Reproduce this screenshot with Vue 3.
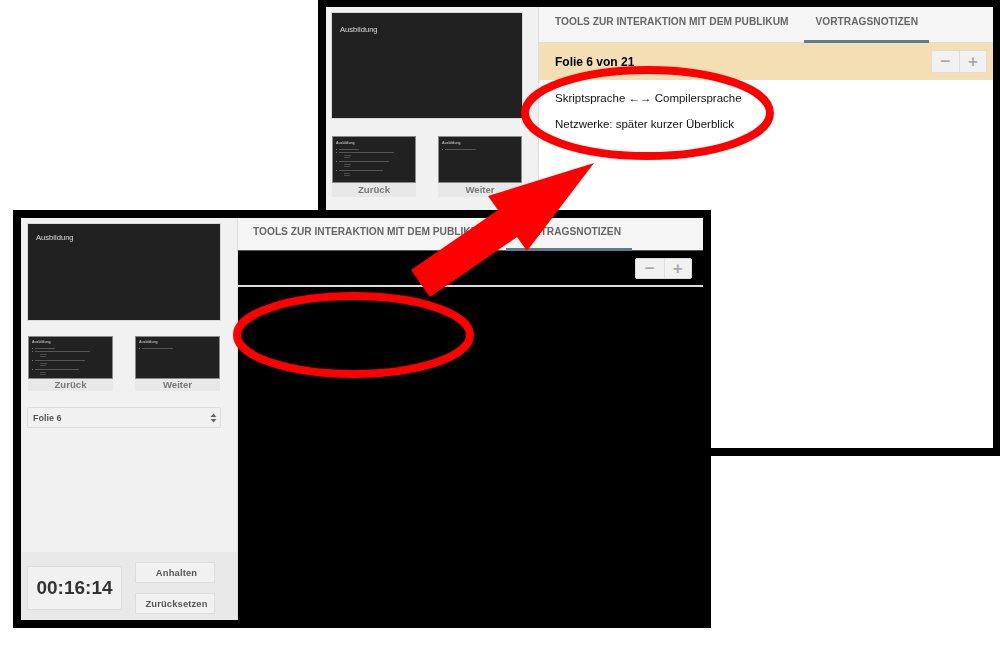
<script setup>
const prevLines = [
  { w: 20, sub: false, top: 4 },
  { w: 55, sub: false, top: 2 },
  { w: 7, sub: true, top: 2 },
  { w: 6, sub: true, top: 1 },
  { w: 50, sub: false, top: 3 },
  { w: 7, sub: true, top: 2 },
  { w: 6, sub: true, top: 1 },
  { w: 44, sub: false, top: 3 },
  { w: 6, sub: true, top: 2 },
  { w: 6, sub: true, top: 1 }
]
const nextLines = [{ w: 31, sub: false, top: 4 }]
const thumbs = [
  { label: 'Zurück', lines: prevLines },
  { label: 'Weiter', lines: nextLines }
]
const windows = [
  { id: 'back', notes: true },
  { id: 'front', notes: false }
]
</script>

<template>
  <div class="page">
    <section v-for="win in windows" :key="win.id" class="win" :class="'win-' + win.id">
      <aside class="side">
        <div class="side-top">
          <div class="slide"><span class="slide-title">Ausbildung</span></div>
          <div class="thumbs">
            <div v-for="t in thumbs" :key="t.label" class="thumb">
              <div class="thumb-slide">
                <span class="thumb-title">Ausbildung</span>
                <i
                  v-for="(l, i) in t.lines"
                  :key="i"
                  class="thumb-line"
                  :class="{ sub: l.sub }"
                  :style="{ width: l.w + 'px', marginTop: l.top + 'px' }"
                ></i>
              </div>
              <div class="thumb-label">{{ t.label }}</div>
            </div>
          </div>
          <div v-if="!win.notes" class="select">
            <span class="soft">Folie 6</span>
            <svg width="7" height="10" viewBox="0 0 7 10">
              <path d="M3.5 0.5 L6.5 4 H0.5 Z M3.5 9.5 L6.5 6 H0.5 Z" fill="#666" />
            </svg>
          </div>
        </div>
        <div v-if="!win.notes" class="timer-bar">
          <div class="timer"><span class="soft">00:16:14</span></div>
          <div class="timer-btns">
            <button class="btn"><span class="soft">Anhalten</span></button>
            <button class="btn"><span class="soft">Zurücksetzen</span></button>
          </div>
        </div>
      </aside>
      <main class="main">
        <nav class="tabs">
          <span class="tab"><span class="soft">TOOLS ZUR INTERAKTION MIT DEM PUBLIKUM</span></span>
          <span class="tab active"><span class="soft">VORTRAGSNOTIZEN</span></span>
        </nav>
        <div class="bar">
          <strong v-if="win.notes" class="count soft">Folie 6 von 21</strong>
          <div class="zoom">
            <span class="zoom-btn">−</span>
            <span class="zoom-btn">+</span>
          </div>
        </div>
        <div class="notes">
          <template v-if="win.notes">
            <p class="soft">Skriptsprache ←→ Compilersprache</p>
            <p class="soft">Netzwerke: später kurzer Überblick</p>
          </template>
        </div>
      </main>
    </section>

    <svg class="marks" width="1000" height="667" viewBox="0 0 1000 667">
      <ellipse cx="647.5" cy="113" rx="122.5" ry="43" fill="none" stroke="#f00" stroke-width="8" />
      <ellipse cx="353.5" cy="335" rx="116.5" ry="39" fill="none" stroke="#f00" stroke-width="8" />
      <polygon points="594,163 488,196 498,210 411,270 430,297 517,237 527,251" fill="#f00" />
    </svg>
  </div>
</template>

<style>
html, body { margin: 0; background: #fff; }
</style>

<style scoped>
.page {
  position: relative;
  width: 1000px;
  height: 667px;
  overflow: hidden;
  background: #fff;
  font-family: "Liberation Sans", Arial, sans-serif;
}
.soft { display: inline-block; filter: blur(0.3px); }
.win {
  position: absolute;
  display: flex;
  box-sizing: border-box;
  border: 8px solid #000;
}
.win-back {
  left: 318px;
  top: 0;
  width: 682px;
  height: 456px;
  border-width: 7px 7px 8px 8px;
  background: #fff;
}
.win-front {
  left: 13px;
  top: 210px;
  width: 698px;
  height: 418px;
  background: #000;
}
.side {
  display: flex;
  flex-direction: column;
  justify-content: space-between;
  flex: none;
  box-sizing: border-box;
  background: #f1f1f1;
  border-right: 1px solid #ddd;
}
.win-back .side { width: 213px; }
.win-front .side { width: 217px; }
.side-top {
  display: flex;
  flex-direction: column;
  padding: 6px 16px 0 6px;
}
.slide {
  box-sizing: border-box;
  background: #212121;
  border: 1px solid #d8d8d8;
  color: #ddd;
  font-size: 7.6px;
}
.win-back .slide { height: 107px; margin: -1px -1px 0; padding: 12px 8px; }
.win-front .slide { height: 98px; margin-top: -1px; padding: 9px 8px; }
.slide-title { display: block; line-height: 9px; filter: blur(0.3px); }
.thumbs {
  display: flex;
  justify-content: space-between;
  margin-top: 17px;
}
.win-front .thumbs { margin: 15px 1px 0; }
.thumb { width: 84px; }
.win-front .thumb { width: 85px; }
.thumb-slide {
  display: flex;
  flex-direction: column;
  align-items: flex-start;
  box-sizing: border-box;
  height: 47px;
  padding: 4px 3px 0;
  overflow: hidden;
  background: #212121;
  border: 1px solid #8a8a8a;
}
.win-front .thumb-slide { height: 43px; padding-top: 3px; }
.thumb-title {
  height: 4px;
  font-size: 3.4px;
  font-weight: bold;
  line-height: 4px;
  color: #bbb;
  filter: blur(0.2px);
}
.thumb-line {
  position: relative;
  display: block;
  flex: none;
  height: 1px;
  margin-left: 3px;
  background: #555;
}
.thumb-line::before {
  content: "";
  position: absolute;
  left: -3px;
  top: 0;
  width: 1px;
  height: 1px;
  background: #777;
}
.thumb-line.sub {
  margin-left: 8px;
  background: #4a4a4a;
}
.thumb-line.sub::before { display: none; }
.thumb-label {
  height: 14px;
  background: #e8e8e8;
  color: #777;
  font-size: 9.6px;
  font-weight: bold;
  line-height: 13px;
  text-align: center;
  filter: blur(0.3px);
}
.win-front .thumb-label { height: 12px; line-height: 11px; }
.select {
  display: flex;
  align-items: center;
  justify-content: space-between;
  box-sizing: border-box;
  height: 21px;
  margin-top: 16px;
  padding: 0 3px 0 5px;
  background: #f1f1f1;
  border: 1px solid #ddd;
  border-radius: 2px;
  color: #555;
  font-size: 9px;
  font-weight: bold;
}
.timer-bar {
  display: flex;
  align-items: flex-start;
  gap: 13px;
  height: 68px;
  box-sizing: border-box;
  padding: 10px 6px 0;
  background: #e9e9e9;
}
.timer {
  box-sizing: border-box;
  width: 95px;
  height: 44px;
  margin-top: 4px;
  background: #f1f1f1;
  border: 1px solid #ddd;
  color: #333;
  font-size: 19px;
  font-weight: bold;
  line-height: 42px;
  text-align: center;
}
.timer-btns {
  display: flex;
  flex-direction: column;
  gap: 10px;
}
.btn {
  box-sizing: border-box;
  width: 80px;
  height: 21px;
  padding: 0 0 1px 3px;
  background: #f1f1f1;
  border: 1px solid #ddd;
  color: #555;
  font-family: inherit;
  font-size: 9.4px;
  font-weight: bold;
  letter-spacing: 0.15px;
}
.main {
  display: flex;
  flex-direction: column;
  flex: 1;
  min-width: 0;
}
.tabs {
  display: flex;
  flex: none;
  box-sizing: border-box;
  background: #f5f5f5;
  border-bottom: 1px solid #ddd;
}
.win-back .tabs { height: 36px; }
.win-front .tabs { height: 33px; border-bottom-color: #555; }
.tab {
  box-sizing: border-box;
  color: #666;
  font-size: 10.2px;
  font-weight: bold;
  white-space: nowrap;
}
.win-back .tab { padding: 0 15px 0 16px; line-height: 30px; }
.win-front .tab { padding: 0 19px 0 15px; line-height: 28px; }
.win-back .tab.active { width: 125px; padding: 0 0 0 12px; }
.win-front .tab.active { width: 126px; padding: 0 0 0 13px; }
.tab.active {
  margin-bottom: -1px;
  border-bottom: 3px solid #5f7c8a;
}
.bar {
  display: flex;
  align-items: center;
  flex: none;
  box-sizing: border-box;
}
.win-back .bar {
  height: 37px;
  padding: 0 6px 0 16px;
  background: #f4deb4;
}
.win-front .bar {
  height: 36px;
  padding: 0 11px 0 16px;
  border-bottom: 2px solid #ddd;
}
.count {
  color: #000;
  font-size: 12px;
}
.zoom {
  display: flex;
  margin-left: auto;
  background: #f1f1f1;
  border: 1px solid #ddd;
  border-radius: 2px;
}
.zoom-btn {
  box-sizing: border-box;
  width: 27px;
  height: 21px;
  color: #aaa;
  font-size: 17px;
  font-weight: bold;
  line-height: 22px;
  text-align: center;
}
.win-front .zoom-btn { width: 27.5px; height: 19px; line-height: 20px; }
.zoom-btn + .zoom-btn { border-left: 1px solid #ddd; }
.notes { padding: 11px 16px; flex: 1; }
.notes p {
  display: block;
  margin: 0 0 12px;
  color: #111;
  font-size: 11.5px;
  line-height: 14px;
}
.marks {
  position: absolute;
  left: 0;
  top: 0;
  pointer-events: none;
}
</style>
